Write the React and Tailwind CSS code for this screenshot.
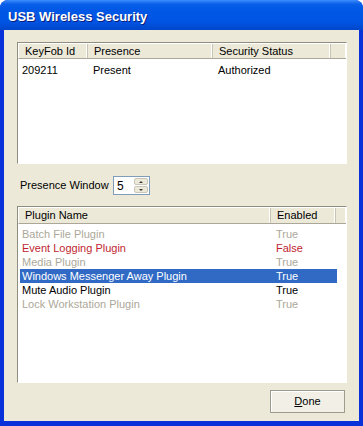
import React from "react";

const font = { fontFamily: "'Liberation Sans', Arial, sans-serif" };

function HeaderCell({ w, children, last }) {
  return (
    <div
      className={`h-full flex items-center pl-[6px] ${last ? "flex-1" : "border-r border-r-[#c7c5b2]"} shadow-[inset_-1px_0_0_#ffffff]`}
      style={w ? { width: w } : undefined}
    >
      {children}
    </div>
  );
}

export default function App() {
  const plugins = [
    { name: "Batch File Plugin", en: "True", c: "text-[#aca899]" },
    { name: "Event Logging Plugin", en: "False", c: "text-[#c01f2f]" },
    { name: "Media Plugin", en: "True", c: "text-[#aca899]" },
    { name: "Windows Messenger Away Plugin", en: "True", c: "text-white", sel: true },
    { name: "Mute Audio Plugin", en: "True", c: "text-black" },
    { name: "Lock Workstation Plugin", en: "True", c: "text-[#aca899]" },
  ];
  return (
    <div
      className="w-[363px] h-[426px] flex flex-col bg-[#0831d9] rounded-t-[8px] overflow-hidden text-[11px] text-black"
      style={font}
    >
      <div className="h-[30px] flex items-center pl-[8px] pt-[3px] bg-[linear-gradient(to_bottom,#3d8eff_0px,#0a5fe8_4px,#0058e6_10px,#0054e3_22px,#0046c9_30px)]">
        <span className="text-white font-bold text-[13px] [text-shadow:1px_1px_0_#0a1e7a]" style={font}>
          USB Wireless Security
        </span>
      </div>
      <div className="flex-1 mx-[4px] mb-[5px] bg-[#ece9d8] flex flex-col pt-[12px] px-[13px]">
        {/* list 1 */}
        <div className="w-[330px] h-[122px] bg-white border-t-[#8f8d80] border-l-[#8f8d80] border-b-white border-r-white border flex flex-col">
          <div className="h-[16px] flex bg-[#ece9d8] border-b border-b-[#aca899] border-l border-t border-l-white border-t-white">
            <HeaderCell w={69}>KeyFob Id</HeaderCell>
            <HeaderCell w={125}>Presence</HeaderCell>
            <HeaderCell w={118}>Security Status</HeaderCell>
            <HeaderCell last />
          </div>
          <div className="flex h-[14px] mt-[4px] items-center">
            <div className="w-[69px] pl-[4px]">209211</div>
            <div className="w-[125px] pl-[6px]">Present</div>
            <div className="w-[118px] pl-[6px]">Authorized</div>
          </div>
        </div>
        {/* presence window */}
        <div className="flex items-center mt-[12px] h-[19px]">
          <span className="ml-[3px] w-[93px]">Presence Window</span>
          <div className="w-[37px] h-[19px] bg-white border border-[#7f9db9] flex items-center">
            <span className="pl-[3px] flex-1 text-[12px]">5</span>
            <div className="w-[16px] h-full flex flex-col p-[1px] gap-[1px]">
              <div className="flex-1 bg-[#ece9d8] border border-[#c9c6b8] rounded-[2px] flex items-center justify-center">
                <div className="w-0 h-0 border-l-[2px] border-r-[2px] border-b-[2px] border-l-transparent border-r-transparent border-b-[#3a3a3a]" />
              </div>
              <div className="flex-1 bg-[#ece9d8] border border-[#c9c6b8] rounded-[2px] flex items-center justify-center">
                <div className="w-0 h-0 border-l-[2px] border-r-[2px] border-t-[2px] border-l-transparent border-r-transparent border-t-[#3a3a3a]" />
              </div>
            </div>
          </div>
        </div>
        {/* list 2 */}
        <div className="mt-[11px] w-[330px] h-[177px] bg-white border-t-[#8f8d80] border-l-[#8f8d80] border-b-white border-r-white border flex flex-col">
          <div className="h-[17px] flex bg-[#ece9d8] border-b border-b-[#aca899] border-l border-t border-l-white border-t-white">
            <HeaderCell w={252}>Plugin Name</HeaderCell>
            <HeaderCell w={65}>Enabled</HeaderCell>
            <HeaderCell last />
          </div>
          <div className="flex flex-col mt-[3px]">
            {plugins.map((p) => (
              <div
                key={p.name}
                className={`flex h-[14px] items-center ml-[2px] w-[317px] ${p.sel ? "bg-[#316ac5]" : ""} ${p.c}`}
              >
                <div className="w-[250px] pl-[2px]">{p.name}</div>
                <div className="w-[65px] pl-[6px]">{p.en}</div>
              </div>
            ))}
          </div>
        </div>
        {/* button */}
        <div className="flex justify-end mt-[7px] pr-[1px]">
          <button className="w-[75px] h-[23px] border border-[#9d9b8e] bg-[#f1efe6] shadow-[inset_1px_1px_0_#ffffff] text-[11px]" style={font}>
            <span className="underline">D</span>one
          </button>
        </div>
      </div>
    </div>
  );
}
